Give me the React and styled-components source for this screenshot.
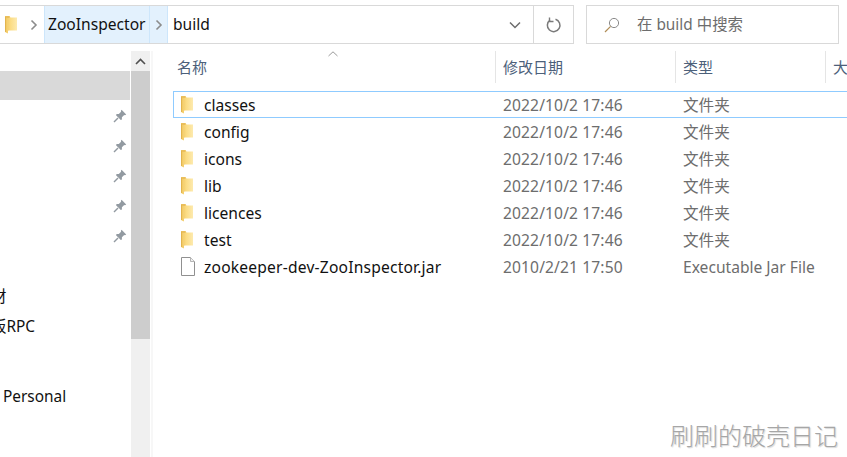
import React from "react";
import styled, { createGlobalStyle } from "styled-components";

const Global = createGlobalStyle`
  html, body { margin: 0; padding: 0; background: #fff; overflow: hidden; }
  body { font-family: "Noto Sans", "Noto Sans CJK SC", sans-serif; }
`;
const Page = styled.div`
  width: 847px; height: 457px; display: flex; flex-direction: column; overflow: hidden; position: relative; background: #fff;
`;
const TopBar = styled.div`
  display: flex; height: 39px; margin-top: 5px; gap: 12px; flex: none;
`;
const Address = styled.div`
  width: 574px; box-sizing: border-box; border: 1px solid #d9d9d9; border-left: 0; display: flex; align-items: stretch; flex: none;
`;
const RootCrumb = styled.div`
  width: 44px; display: flex; align-items: center; padding-left: 5px; box-sizing: border-box; gap: 13px; flex: none;
`;
const Crumb = styled.div`
  display: flex; align-items: center; font-size: 15.6px; color: #111; padding-bottom: 2px;
  ${p => p.$active && `background: #e3f1fd; border: 1px solid #cde6fb; border-width: 0 1px; box-sizing: border-box; padding: 0 4px 2px 3px; width: 106px; flex: none;`}
  ${p => p.$plain && `padding-left: 5px;`}
`;
const ChevBox = styled.div`
  width: 18px; display: flex; align-items: center; justify-content: center; flex: none;
  background: #e3f1fd; border-right: 1px solid #cde6fb; box-sizing: border-box;
`;
const Grow = styled.div`flex: 1;`;
const DropBox = styled.div`
  width: 38px; display: flex; align-items: center; justify-content: center; border-right: 1px solid #d9d9d9; box-sizing: border-box; flex: none;
`;
const RefreshBox = styled.div`
  width: 39px; display: flex; align-items: center; justify-content: center; flex: none;
`;
const Search = styled.div`
  width: 253px; box-sizing: border-box; border: 1px solid #d9d9d9; display: flex; align-items: center; padding-left: 17px; gap: 17px;
  font-size: 15.4px; color: #6d6d6d; flex: none;
`;
const SearchLabel = styled.span`padding-bottom: 2px;`;
const Body = styled.div`
  display: flex; flex: 1; margin-top: 7px; min-height: 0;
`;
const Side = styled.div`
  width: 131px; flex: none; display: flex; flex-direction: column; padding-top: 20px; box-sizing: border-box; overflow: hidden;
`;
const SelRow = styled.div`
  height: 29px; margin-right: 1px; background: #d9d9d9; flex: none;
`;
const NavRow = styled.div`
  height: 30px; flex: none; display: flex; align-items: center; justify-content: flex-end; padding: 2px 4px 0 0; box-sizing: border-box;
`;
const NavSpacer = styled.div`height: ${p => p.$h}px; flex: none;`;
const NavText = styled.div`
  height: 30px; flex: none; display: flex; align-items: center; font-size: 15.4px; color: #111; white-space: nowrap;
  margin-left: ${p => p.$x}px;
`;
const Scroll = styled.div`
  width: 19px; flex: none; background: #f0f0f0; display: flex; flex-direction: column; margin-right: 1px;
`;
const ScrollUp = styled.div`
  height: 20px; display: flex; align-items: center; justify-content: center; flex: none;
`;
const Thumb = styled.div`height: 268px; background: #cdcdcd; flex: none;`;
const Main = styled.div`
  flex: 1; min-width: 0; position: relative; border-left: 2px solid #f7f7f7; padding-left: 21px; overflow: hidden;
`;
const Header = styled.div`
  display: grid; grid-template-columns: 321px 180px 150px 40px; height: 32px; align-items: center;
  font-size: 15px; color: #4c607a;
`;
const HCell = styled.div`
  height: 100%; display: flex; align-items: center; padding: 0 0 2px 7px; box-sizing: border-box; white-space: nowrap;
  ${p => p.$sep && `border-left: 1px solid #e5e5e5;`}
  ${p => p.$first && `padding-left: 3px;`}
`;
const Caret = styled.svg`position: absolute; left: 175px; top: 0;`;
const List = styled.div`
  display: flex; flex-direction: column; margin-top: 8px;
`;
const Row = styled.div`
  display: grid; grid-template-columns: 321px 180px 150px 1fr; height: 27px; align-items: center; box-sizing: border-box;
  font-size: 15.6px; margin: 0 -10px 0 -1px; padding-left: 1px;
  ${p => p.$sel && `box-shadow: inset 0 0 0 1px #8fcbff;`}
`;
const NameCell = styled.div`
  display: flex; align-items: center; padding-left: 7px; gap: 11px; color: #111; white-space: nowrap;
  ${p => p.$file && `gap: 9px; letter-spacing: 0.2px;`}
`;
const MetaCell = styled.div`
  color: #6d6d6d; padding-left: 8px; white-space: nowrap; letter-spacing: ${p => p.$tight ? "0" : "0.12px"};
`;
const Mark = styled.div`
  position: absolute; right: 9px; bottom: 5px; font-size: 24px; color: #a6a6a6;
  font-family: "Noto Sans CJK SC", sans-serif; font-weight: 300; text-shadow: 1px 1px 1px #d8d8d8;
`;

const FolderIcon = ({ id }) => (
  <svg width="12" height="20" viewBox="0 0 12 20" style={{ flex: "none" }}>
    <defs>
      <linearGradient id={id} x1="0" x2="1" y1="0" y2="0">
        <stop offset="0" stopColor="#efc45c" />
        <stop offset="0.45" stopColor="#fbdc84" />
        <stop offset="1" stopColor="#fdeaaf" />
      </linearGradient>
    </defs>
    <path d="M0 1h4.5l1 1.5H12V15.5H3V18.5L0 17z" fill={`url(#${id})`} />
    <path d="M0 1h4.5v2H0z" fill="#eabf5c" />
    <path d="M.5 17V2" stroke="#e2b44e" strokeWidth="1" />
    <path d="M3 4v11.5" stroke="#f5d277" strokeWidth="1" />
  </svg>
);
const FileIcon = () => (
  <svg width="14" height="19" viewBox="0 0 14 19" style={{ flex: "none" }}>
    <path d="M.5 .5h9l4 4v14H.5z" fill="#fff" stroke="#909090" />
    <path d="M9.5 .5v4h4" fill="#f0f0f0" stroke="#b5b5b5" />
  </svg>
);
const Chevron = ({ color = "#8c8c8c" }) => (
  <svg width="8" height="12" viewBox="0 0 8 12"><path d="M1.5 1.5 6 6l-4.5 4.5" fill="none" stroke={color} strokeWidth="1.6" /></svg>
);
const Pin = () => (
  <svg width="14" height="14" viewBox="0 0 14 14">
    <path d="M8.6.8 13.2 5.4 12 6.2 11.2 5.9 8.9 8.2 8.9 10.4 7.8 11 3 6.2 3.6 5.1 5.8 5.1 8.1 2.8 7.8 2z" fill="#929aa1" />
    <path d="M5 9 1 13" stroke="#929aa1" strokeWidth="1.4" />
  </svg>
);

const folders = ["classes", "config", "icons", "lib", "licences", "test"];

export default function App() {
  return (
    <Page>
      <Global />
      <TopBar>
        <Address>
          <RootCrumb>
            <FolderIcon id="f-root" />
            <Chevron />
          </RootCrumb>
          <Crumb $active>ZooInspector</Crumb>
          <ChevBox><Chevron /></ChevBox>
          <Crumb $plain>build</Crumb>
          <Grow />
          <DropBox>
            <svg width="12" height="8" viewBox="0 0 12 8"><path d="M1 1.5 6 6.5l5-5" fill="none" stroke="#6d6d6d" strokeWidth="1.5" /></svg>
          </DropBox>
          <RefreshBox>
            <svg width="16" height="16" viewBox="0 0 16 16">
              <path d="M9.5 2.3A6.3 6.3 0 1 1 4 3.2" fill="none" stroke="#7a7a7a" strokeWidth="1.5" />
              <path d="M3.5 .5v4h4" fill="none" stroke="#7a7a7a" strokeWidth="1.4" />
            </svg>
          </RefreshBox>
        </Address>
        <Search>
          <svg width="16" height="16" viewBox="0 0 16 16">
            <circle cx="10" cy="6" r="4.6" fill="none" stroke="#8a8a8a" strokeWidth="1" />
            <path d="M6.6 9.4 1 15" stroke="#b08d57" strokeWidth="1.2" />
          </svg>
          <SearchLabel>在 build 中搜索</SearchLabel>
        </Search>
      </TopBar>
      <Body>
        <Side>
          <SelRow />
          {[0, 1, 2, 3, 4].map(i => <NavRow key={i}><Pin /></NavRow>)}
          <NavSpacer $h={30} />
          <NavText $x={-9}>材</NavText>
          <NavText $x={-9}>板RPC</NavText>
          <NavSpacer $h={41} />
          <NavText $x={3}>Personal</NavText>
        </Side>
        <Scroll>
          <ScrollUp>
            <svg width="11" height="7" viewBox="0 0 11 7"><path d="M1 6 5.5 1.5 10 6" fill="none" stroke="#505050" strokeWidth="1.6" /></svg>
          </ScrollUp>
          <Thumb />
        </Scroll>
        <Main>
          <Caret width="10" height="6" viewBox="0 0 10 6"><path d="M.5 5 5 .8 9.5 5" fill="none" stroke="#9a9a9a" /></Caret>
          <Header>
            <HCell $first>名称</HCell>
            <HCell $sep>修改日期</HCell>
            <HCell $sep>类型</HCell>
            <HCell $sep>大小</HCell>
          </Header>
          <List>
            {folders.map((f, i) => (
              <Row key={f} $sel={i === 0}>
                <NameCell><FolderIcon id={`f-${f}`} />{f}</NameCell>
                <MetaCell>2022/10/2 17:46</MetaCell>
                <MetaCell $tight>文件夹</MetaCell>
              </Row>
            ))}
            <Row>
              <NameCell $file><FileIcon />zookeeper-dev-ZooInspector.jar</NameCell>
              <MetaCell>2010/2/21 17:50</MetaCell>
              <MetaCell $tight>Executable Jar File</MetaCell>
            </Row>
          </List>
        </Main>
      </Body>
      <Mark>刷刷的破壳日记</Mark>
    </Page>
  );
}
